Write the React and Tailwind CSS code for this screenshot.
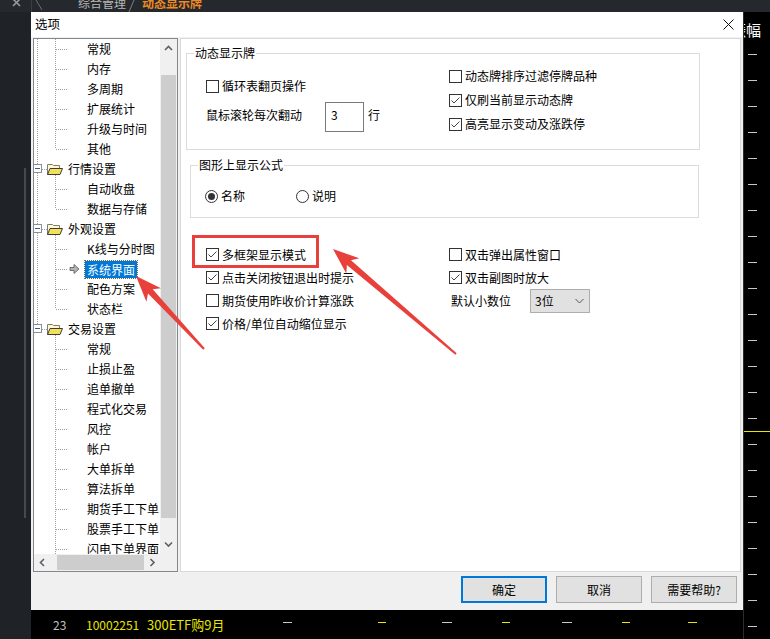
import React from 'react'

const TREE = [
  { t: '常规', k: 'c', root: 1 },
  { t: '内存', k: 'c', root: 1 },
  { t: '多周期', k: 'c', root: 1 },
  { t: '扩展统计', k: 'c', root: 1 },
  { t: '升级与时间', k: 'c', root: 1 },
  { t: '其他', k: 'c', root: 1, last: 1 },
  { t: '行情设置', k: 'p' },
  { t: '自动收盘', k: 'c', root: 1 },
  { t: '数据与存储', k: 'c', root: 1, last: 1 },
  { t: '外观设置', k: 'p' },
  { t: 'K线与分时图', k: 'c', root: 1 },
  { t: '系统界面', k: 'c', root: 1, sel: 1 },
  { t: '配色方案', k: 'c', root: 1 },
  { t: '状态栏', k: 'c', root: 1, last: 1 },
  { t: '交易设置', k: 'p', lastRoot: 1 },
  { t: '常规', k: 'c' },
  { t: '止损止盈', k: 'c' },
  { t: '追单撤单', k: 'c' },
  { t: '程式化交易', k: 'c' },
  { t: '风控', k: 'c' },
  { t: '帐户', k: 'c' },
  { t: '大单拆单', k: 'c' },
  { t: '算法拆单', k: 'c' },
  { t: '期货手工下单', k: 'c' },
  { t: '股票手工下单', k: 'c' },
  { t: '闪电下单界面', k: 'c' },
]

const dot = { stroke: '#a0a0a0', strokeDasharray: '1 1', shapeRendering: 'crispEdges' }

function Folder() {
  return (
    <g transform="translate(13 4)">
      <path d="M0.5 11.5 V1.5 H5.5 L6.5 2.5 H12.5 V11.5 Z" fill="#fffbd0" stroke="#7a7a7a" />
      <path d="M0.5 11.5 L3 5.5 H15.5 L13 11.5 Z" fill="#f2e15a" stroke="#3c3c3c" />
    </g>
  )
}

function TreeRow({ r }) {
  if (r.k === 'p') {
    return (
      <div className="h-[20px] flex items-center whitespace-nowrap">
        <svg width="34" height="20" className="shrink-0">
          <line x1="3.5" y1="0" x2="3.5" y2="6" {...dot} />
          {!r.lastRoot && <line x1="3.5" y1="14" x2="3.5" y2="20" {...dot} />}
          <rect x="-0.5" y="5.5" width="8" height="8" fill="#fff" stroke="#8f8f8f" />
          <line x1="1" y1="9.5" x2="6" y2="9.5" stroke="#2a5caa" />
          <line x1="8" y1="10.5" x2="13" y2="10.5" {...dot} />
          <line x1="21.5" y1="16" x2="21.5" y2="20" {...dot} />
          <Folder />
        </svg>
        <span>{r.t}</span>
      </div>
    )
  }
  return (
    <div className="h-[20px] flex items-center whitespace-nowrap">
      <svg width="53" height="20" className="shrink-0">
        {r.root && <line x1="3.5" y1="0" x2="3.5" y2="20" {...dot} />}
        <line x1="21.5" y1="0" x2="21.5" y2={r.last ? 10 : 20} {...dot} />
        <line x1="22" y1="10.5" x2="33" y2="10.5" {...dot} />
        {r.sel && (
          <g>
            <path d="M36 8.5 H40 V5.5 L45 10 L40 14.5 V11.5 H36 Z" fill="#b4b4b4" stroke="#555" strokeWidth="0.8" />
          </g>
        )}
      </svg>
      {r.sel ? (
        <span className="-ml-[2px] px-[2px] h-[17px] leading-[17px] bg-[#0078d7] text-white outline-1 outline-dotted outline-[#7a6a40]">
          {r.t}
        </span>
      ) : (
        <span>{r.t}</span>
      )}
    </div>
  )
}

function Chevron({ dir }) {
  const d = {
    up: 'M1 5 L4.5 1.5 L8 5',
    down: 'M1 1.5 L4.5 5 L8 1.5',
    left: 'M5 1 L1.5 4.5 L5 8',
    right: 'M1.5 1 L5 4.5 L1.5 8',
  }[dir]
  const w = dir === 'up' || dir === 'down' ? 9 : 7
  const h = dir === 'up' || dir === 'down' ? 7 : 9
  return (
    <svg width={w} height={h}>
      <path d={d} fill="none" stroke="#606060" strokeWidth="1.6" />
    </svg>
  )
}

function Tree() {
  return (
    <div className="w-[145px] h-[534px] border border-[#828790] bg-white flex flex-col shrink-0">
      <div className="flex flex-1 min-h-0">
        <div className="flex-1 overflow-hidden">
          {TREE.map((r, i) => (
            <TreeRow key={i} r={r} />
          ))}
        </div>
        <div className="w-[17px] bg-[#f0f0f0] flex flex-col">
          <div className="h-[17px] flex items-center justify-center pt-[2px]">
            <Chevron dir="up" />
          </div>
          <div className="mt-[19px] ml-[1px] w-[15px] h-[443px] bg-[#cdcdcd]" />
          <div className="flex-1 flex items-end justify-center pb-[6px]">
            <Chevron dir="down" />
          </div>
        </div>
      </div>
      <div className="h-[17px] flex">
        <div className="flex-1 bg-[#f0f0f0] flex items-center">
          <div className="w-[17px] flex justify-center">
            <Chevron dir="left" />
          </div>
          <div className="ml-[6px] w-[87px] h-[15px] bg-[#cdcdcd]" />
          <div className="flex-1 flex justify-center">
            <Chevron dir="right" />
          </div>
        </div>
        <div className="w-[17px] bg-[#f0f0f0]" />
      </div>
    </div>
  )
}

function Check({ on }) {
  return (
    <span className="w-[13px] h-[13px] border border-[#333] bg-white shrink-0 flex items-center justify-center">
      {on && (
        <svg width="11" height="11" viewBox="0 0 11 11">
          <path d="M1.5 5.5 L4 8 L9.5 2.5" fill="none" stroke="#444" strokeWidth="1" />
        </svg>
      )}
    </span>
  )
}

function Radio({ on }) {
  return (
    <span className="w-[13px] h-[13px] rounded-full border border-[#333] bg-white shrink-0 flex items-center justify-center">
      {on && <span className="w-[7px] h-[7px] rounded-full bg-[#333]" />}
    </span>
  )
}

function CheckRow({ on, label, h = 'h-[20px]' }) {
  return (
    <div className={`${h} flex items-center gap-[3px] whitespace-nowrap`}>
      <Check on={on} />
      <span>{label}</span>
    </div>
  )
}

function Panel() {
  return (
    <div className="w-[561px] h-[534px] border border-[#d9d9d9] bg-white shrink-0">
      <div className="relative ml-[5px] mt-[14px] w-[514px] h-[97px] border border-[#dcdcdc] flex">
        <span className="absolute left-[7px] -top-[9px] bg-white px-[1px] leading-[16px]">动态显示牌</span>
        <div className="w-[262px] pl-[19px] pt-[22px]">
          <CheckRow label="循环表翻页操作" />
          <div className="mt-[6px] h-[30px] flex items-center">
            <span className="w-[119px] pb-[4px]">鼠标滚轮每次翻动</span>
            <div className="w-[39px] h-[30px] border border-[#7a7a7a] pl-[5px] pt-[2px] leading-[20px]">3</div>
            <span className="ml-[4px] pb-[4px]">行</span>
          </div>
        </div>
        <div className="pt-[10px]">
          <CheckRow h="h-[24px]" label="动态牌排序过滤停牌品种" />
          <CheckRow h="h-[24px]" on label="仅刷当前显示动态牌" />
          <CheckRow h="h-[24px]" on label="高亮显示变动及涨跌停" />
        </div>
      </div>

      <div className="relative ml-[9px] mt-[15px] w-[509px] h-[53px] border border-[#dcdcdc] pl-[14px] pt-[20px]">
        <span className="absolute left-[7px] -top-[9px] bg-white px-[1px] leading-[16px]">图形上显示公式</span>
        <div className="h-[20px] flex items-center">
          <div className="w-[91px] flex items-center gap-[3px]">
            <Radio on />
            <span>名称</span>
          </div>
          <div className="flex items-center gap-[3px]">
            <Radio />
            <span>说明</span>
          </div>
        </div>
      </div>

      <div className="mt-[25px] flex">
        <div className="w-[268px] pl-[25px]">
          <CheckRow h="h-[23px]" on label="多框架显示模式" />
          <CheckRow h="h-[23px]" on label="点击关闭按钮退出时提示" />
          <CheckRow h="h-[23px]" label="期货使用昨收价计算涨跌" />
          <CheckRow h="h-[23px]" on label="价格/单位自动缩位显示" />
        </div>
        <div>
          <CheckRow h="h-[23px]" label="双击弹出属性窗口" />
          <CheckRow h="h-[23px]" on label="双击副图时放大" />
          <div className="h-[23px] flex items-center pl-[2px]">
            <span className="w-[79px]">默认小数位</span>
            <div className="w-[60px] h-[24px] bg-[#e1e1e1] border border-[#adadad] flex items-center justify-between pl-[4px] pr-[5px]">
              <span>3位</span>
              <svg width="9" height="6">
                <path d="M0.5 1 L4.5 5 L8.5 1" fill="none" stroke="#555" strokeWidth="1" />
              </svg>
            </div>
          </div>
        </div>
      </div>
    </div>
  )
}

function Btn({ children, primary }) {
  return (
    <button
      className={`w-[86px] h-[27px] bg-[#e1e1e1] flex items-center justify-center ${
        primary ? 'border-2 border-[#0078d7]' : 'border border-[#adadad]'
      }`}
    >
      {children}
    </button>
  )
}

function Dialog() {
  return (
    <div className="h-[598px] flex flex-col bg-[#f0f0f0]">
      <div className="h-[25px] bg-white flex items-center justify-between pl-[4px] pr-[9px]">
        <span className="text-[12.5px]">选项</span>
        <svg width="11" height="11">
          <path d="M0.5 0.5 L10.5 10.5 M10.5 0.5 L0.5 10.5" stroke="#111" strokeWidth="1" />
        </svg>
      </div>
      <div className="pt-[1px] pl-[2px] flex gap-[2px]">
        <Tree />
        <Panel />
      </div>
      <div className="mt-[4px] flex justify-end gap-[9px] pr-[6px]">
        <Btn primary>确定</Btn>
        <Btn>取消</Btn>
        <Btn>需要帮助?</Btn>
      </div>
    </div>
  )
}

function Dash({ y, cls }) {
  return <span className={`h-px ${y ? 'bg-[#e6e600]' : 'bg-[#c8c8c8]'} ${cls}`} />
}

function BottomRow() {
  return (
    <div className="h-[29px] bg-black flex items-center whitespace-nowrap text-[12px]">
      <span className="ml-[22px] w-[33px] text-[#c0c0c0]">23</span>
      <span className="w-[61px] text-[#e6e600]">10002251</span>
      <span className="w-[136px] text-[#e6e600] text-[13px]">300ETF购9月</span>
      <Dash cls="w-[9px] mt-[-4px]" />
      <Dash y cls="ml-[86px] w-[8px] mt-[-4px]" />
      <Dash cls="ml-[56px] w-[10px] mt-[-4px]" />
      <Dash y cls="ml-[50px] w-[8px] mt-[-4px]" />
      <Dash cls="ml-[52px] w-[10px] mt-[-4px]" />
      <Dash y cls="ml-[50px] w-[8px] mt-[-4px]" />
      <Dash y cls="ml-[58px] w-[9px] mt-[-4px]" />
    </div>
  )
}

function RightCol() {
  const rows = Array.from({ length: 23 }, (_, i) => i)
  return (
    <div className="w-[27px] bg-black border-l border-[#2c2c2c] flex flex-col overflow-hidden">
      <div className="mt-[10px] h-[16px] leading-[16px] flex justify-end pr-[9px] overflow-hidden whitespace-nowrap text-[15px] text-white">
        振幅
      </div>
      <div className="mt-[3px]">
        {rows.map((i) => (
          <div
            key={i}
            className={`h-[26px] flex items-center pl-[4px] ${i === 15 ? 'border-t border-[#e6e600]' : ''}`}
          >
            <span className="w-[9px] h-px bg-[#c8c8c8]" />
          </div>
        ))}
      </div>
    </div>
  )
}

function TopBar() {
  return (
    <div className="h-[12px] bg-[#25282c] flex overflow-hidden whitespace-nowrap">
      <svg width="9" height="9" className="ml-[12px] -mt-[2px] shrink-0">
        <path d="M1 1 L8 8 M8 1 L1 8" stroke="#9a9a9a" strokeWidth="1.6" />
      </svg>
      <span className="ml-[10px] w-px h-full bg-[#3b3e43]" />
      <svg width="8" height="12" className="ml-[3px] shrink-0">
        <path d="M1 0 L7 10" stroke="#6a6d72" strokeWidth="1" />
      </svg>
      <span className="ml-[35px] -mt-[5px] leading-[16px] text-[12px] text-[#b8b8b8]">综合管理</span>
      <svg width="7" height="12" className="ml-[2px] shrink-0">
        <path d="M6 0 L1 12" stroke="#7a7d82" strokeWidth="1" />
      </svg>
      <span className="ml-[7px] -mt-[5px] leading-[16px] text-[12px] font-bold text-[#f08a24]">动态显示牌</span>
    </div>
  )
}

function arrowPts(tip, tail) {
  const [tx, ty] = tip
  const [sx, sy] = tail
  const dx = sx - tx
  const dy = sy - ty
  const len = Math.hypot(dx, dy)
  const ux = dx / len
  const uy = dy / len
  const nx = -uy
  const ny = ux
  const L = 24
  const hw = 10
  const w1 = 3.2
  const w2 = 1.1
  const p = (bx, by, d, o) => `${(bx + ux * d + nx * o).toFixed(1)},${(by + uy * d + ny * o).toFixed(1)}`
  return [
    p(tx, ty, 0, 0),
    p(tx, ty, L + 2, hw),
    p(tx, ty, L - 3, w1),
    p(sx, sy, 0, w2),
    p(sx, sy, 0, -w2),
    p(tx, ty, L - 3, -w1),
    p(tx, ty, L + 2, -hw),
  ].join(' ')
}

function Marks() {
  return (
    <svg className="absolute inset-0 pointer-events-none" width="770" height="639">
      <rect x="193.5" y="236.5" width="124" height="30" fill="none" stroke="#e8413c" strokeWidth="3" />
      <polygon points={arrowPts([333, 249], [456, 354])} fill="#e8413c" />
      <polygon points={arrowPts([136, 276], [204, 349])} fill="#e8413c" />
    </svg>
  )
}

export default function App() {
  return (
    <div className="relative w-[770px] h-[639px] overflow-hidden bg-black font-['Noto_Sans_CJK_SC',sans-serif] text-[12px] text-black">
      <TopBar />
      <div className="flex h-[627px]">
        <div className="w-[31px] bg-[#1f2226] pt-[156px]">
          <div className="ml-[24px] w-[2px] h-[350px] bg-[#46494e]" />
        </div>
        <div className="w-[712px] flex flex-col">
          <Dialog />
          <BottomRow />
        </div>
        <RightCol />
      </div>
      <Marks />
    </div>
  )
}
